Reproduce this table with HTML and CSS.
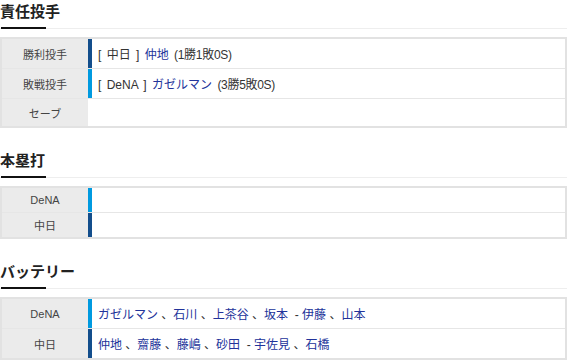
FILE: index.html
```html
<!DOCTYPE html>
<html lang="ja">
<head>
    <meta charset="UTF-8">
    <title>試合結果</title>
    <link rel="stylesheet" href="styles.css">
</head>
<body>
<div class="game">

    <div class="sec">
        <h3 class="sec-ttl">責任投手</h3>
        <table class="res">
            <tr>
                <th>勝利投手</th>
                <td class="d pit"><span class="bar c"></span>[ 中日 ] <a href="#">仲地</a> <span class="rec">(1勝1敗0S)</span></td>
            </tr>
            <tr>
                <th>敗戦投手</th>
                <td class="d pit"><span class="bar db"></span>[ DeNA ] <a href="#">ガゼルマン</a> <span class="rec">(3勝5敗0S)</span></td>
            </tr>
            <tr class="sv">
                <th>セーブ</th>
                <td class="d"></td>
            </tr>
        </table>
    </div>

    <div class="sec">
        <h3 class="sec-ttl">本塁打</h3>
        <table class="res thin">
            <tr>
                <th>DeNA</th>
                <td class="d"><span class="bar db"></span></td>
            </tr>
            <tr>
                <th>中日</th>
                <td class="d"><span class="bar c"></span></td>
            </tr>
        </table>
    </div>

    <div class="sec">
        <h3 class="sec-ttl">バッテリー</h3>
        <table class="res">
            <tr>
                <th>DeNA</th>
                <td class="d"><span class="bar db"></span><a href="#">ガゼルマン</a> 、<a href="#">石川</a> 、<a href="#">上茶谷</a> 、<a href="#">坂本</a> &nbsp;- <a href="#">伊藤</a> 、<a href="#">山本</a></td>
            </tr>
            <tr>
                <th>中日</th>
                <td class="d"><span class="bar c"></span><a href="#">仲地</a> 、<a href="#">齋藤</a> 、<a href="#">藤嶋</a> 、<a href="#">砂田</a> &nbsp;- <a href="#">宇佐見</a> 、<a href="#">石橋</a></td>
            </tr>
        </table>
    </div>

</div>
</body>
</html>
```

FILE: styles.css
```css
*{
    margin: 0;
    padding: 0;
}
body{
    font-family: "Liberation Sans", "Noto Sans CJK JP", sans-serif;
    font-size: 12px;
    color: #333;
    background: #fff;
}
.game{
    width: 567px;
    padding-top: 2px;
}
.sec{
    margin-bottom: 23px;
}
.sec:last-child{
    margin-bottom: 0;
}

/* 見出し：下線の左側だけ濃くする */
.sec-ttl{
    position: relative;
    font-size: 15px;
    font-weight: bold;
    line-height: 20px;
    padding-bottom: 6px;
    border-bottom: 1px solid #eee;
    margin-bottom: 8px;
    color: #222;
}
.sec-ttl::after{
    content: "";
    position: absolute;
    left: 1px;
    bottom: -1px;
    width: 45px;
    height: 2px;
    background: #111;
}

.res{
    width: 567px;
    border-collapse: collapse;
    border: 2px solid #e2e2e2;
}
.res th, .res td{
    border-top: 1px solid #e6e6e6;
    height: 29px;
    vertical-align: middle;
}
.res th{
    width: 86px;
    background: #ebebeb;
    font-size: 11px;
    font-weight: normal;
    text-align: center;
    color: #444;
}
.res .sv th, .res .sv td{
    height: 27px;
}
.res.thin th, .res.thin td{
    height: 24px;
}
.res td.d{
    position: relative;
    padding-left: 10px;
    text-align: left;
    white-space: nowrap;
}
.res td.pit{
    word-spacing: 2px;
}
.res td.pit .rec{
    word-spacing: 0;
    letter-spacing: -0.3px;
}
.res a{
    color: #22339a;
    text-decoration: none;
}

/* チームカラーの縦線 */
.bar{
    position: absolute;
    left: 0;
    top: 0;
    bottom: 0;
    width: 4px;
}
.bar.c{
    background: #134e8c;
}
.bar.db{
    background: #009ae0;
}
```
